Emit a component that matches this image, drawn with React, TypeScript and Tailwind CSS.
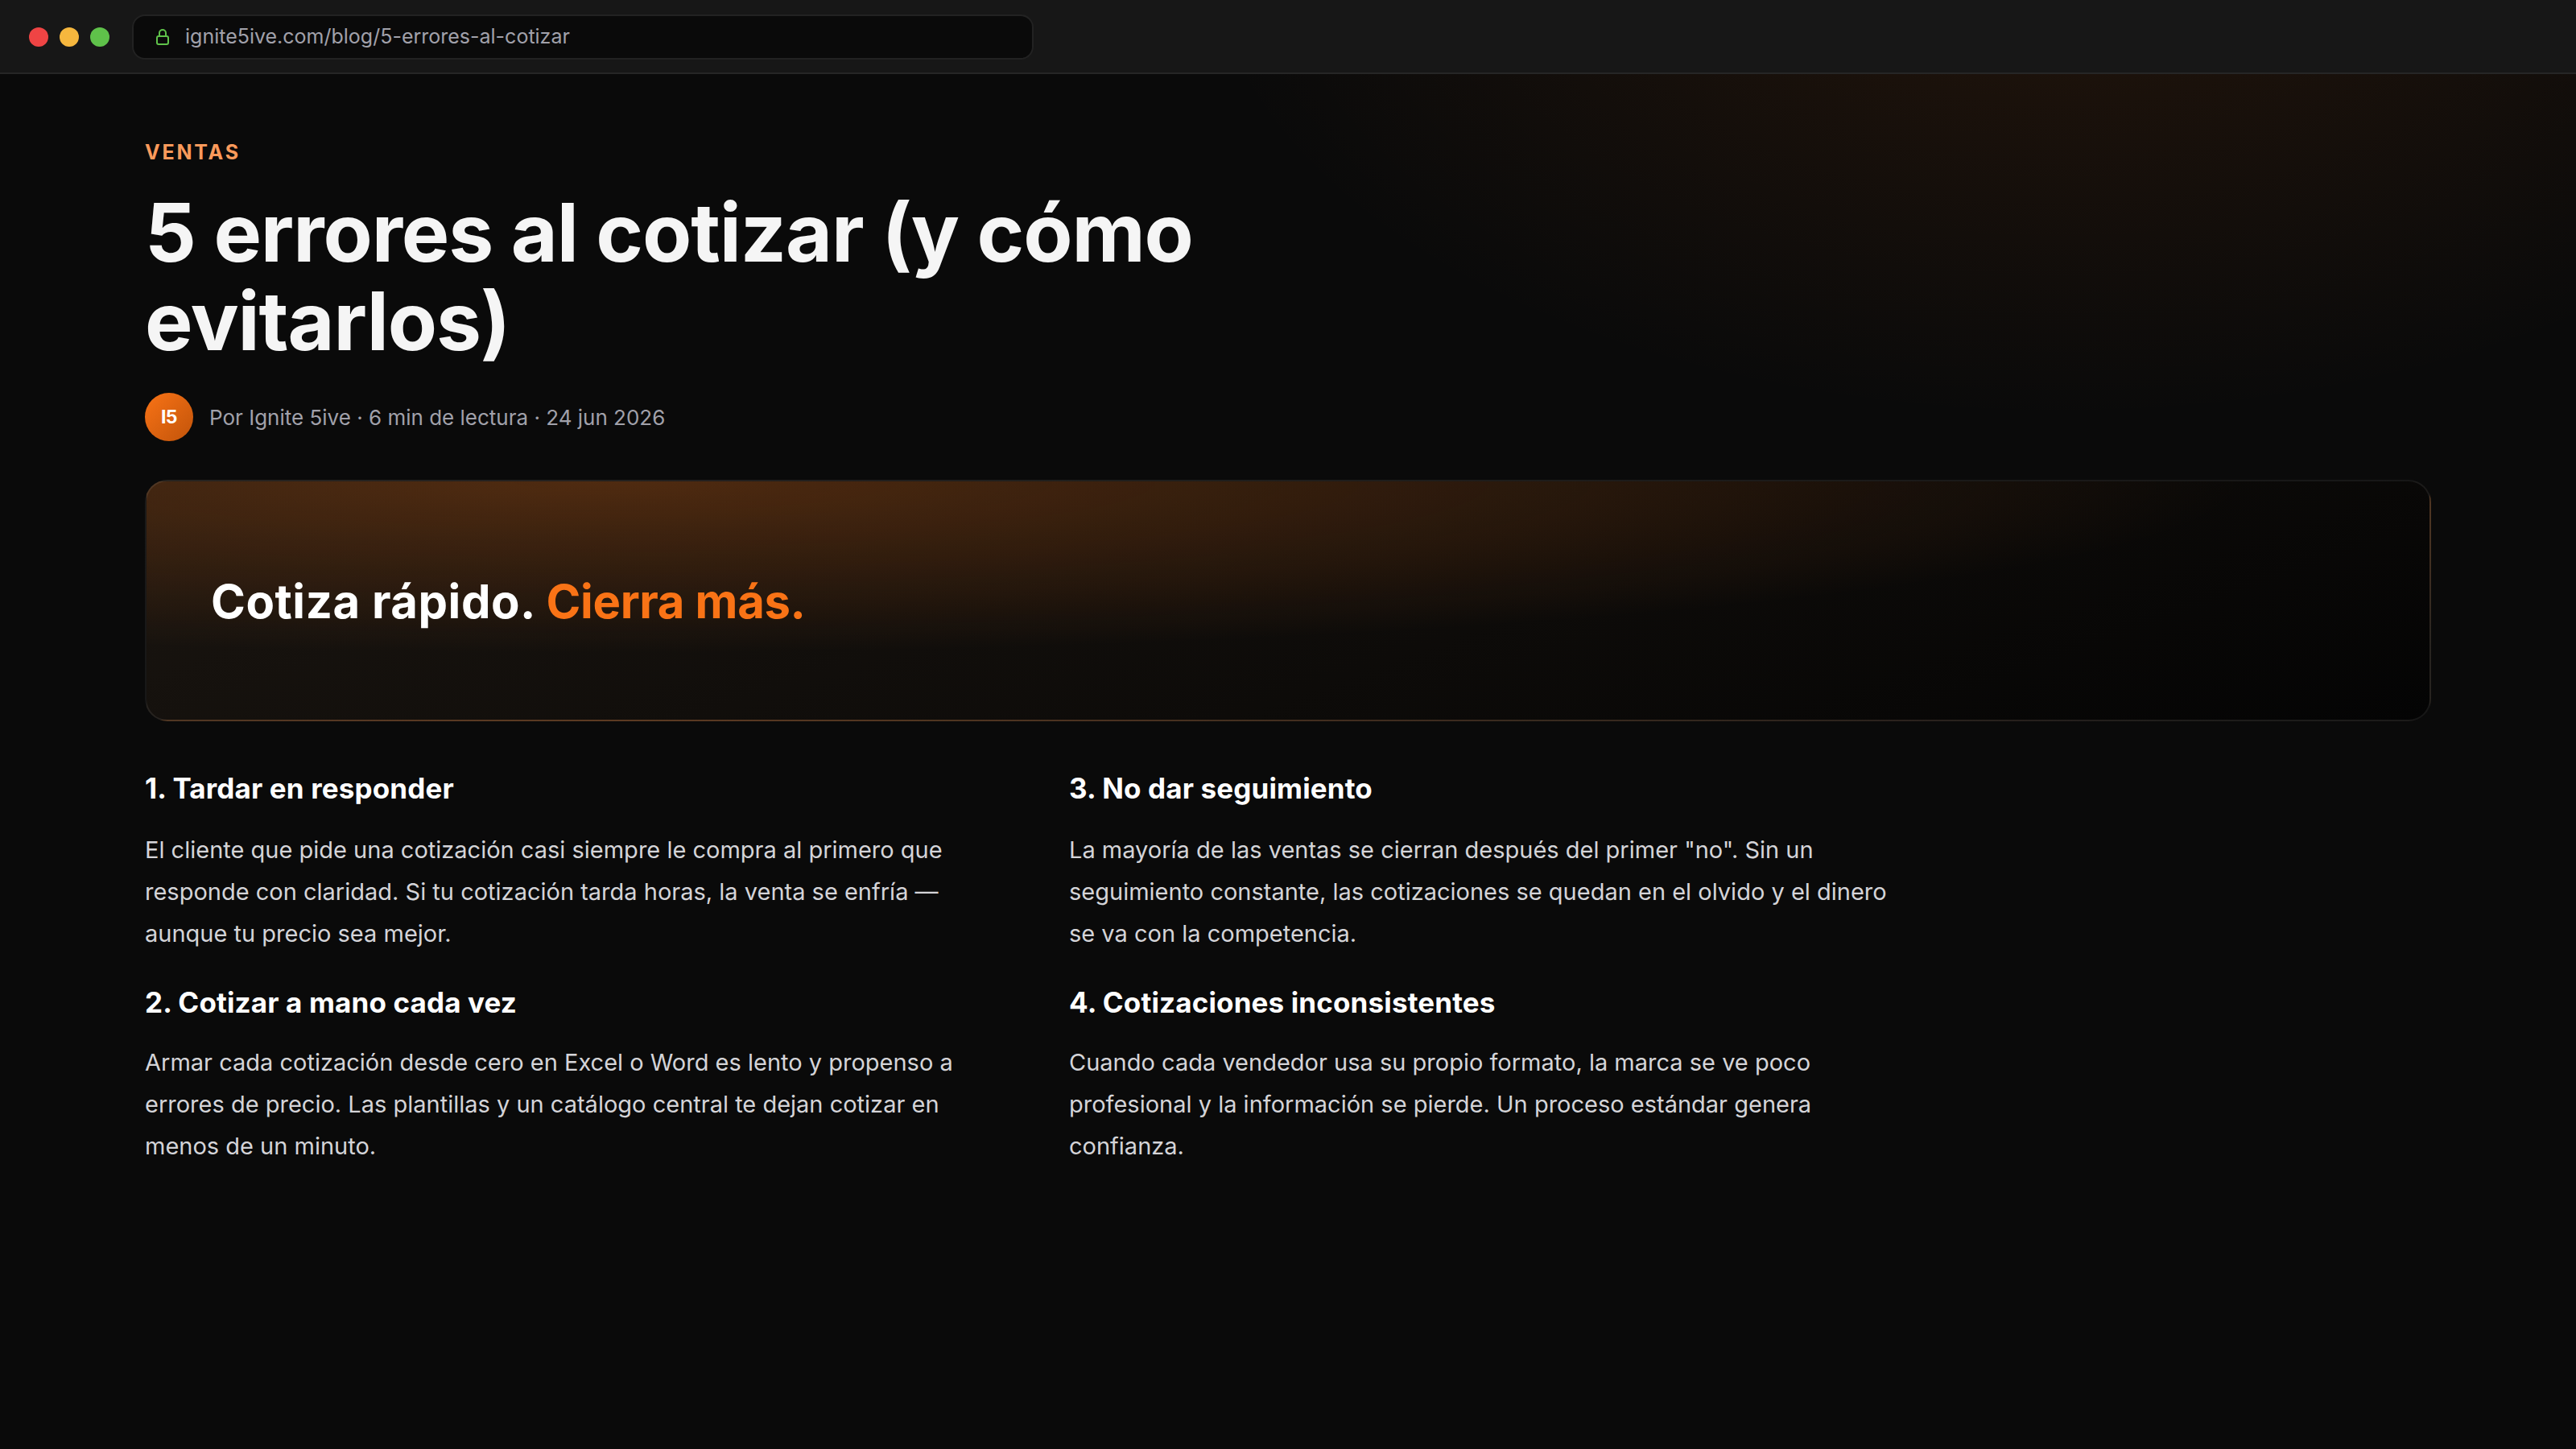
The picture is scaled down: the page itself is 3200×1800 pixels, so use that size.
const articles = [
  {
    title: '1. Tardar en responder',
    lines: [
      'El cliente que pide una cotización casi siempre le compra al primero que',
      'responde con claridad. Si tu cotización tarda horas, la venta se enfría —',
      'aunque tu precio sea mejor.',
    ],
    spacing: 'mt-7',
  },
  {
    title: '3. No dar seguimiento',
    lines: [
      'La mayoría de las ventas se cierran después del primer "no". Sin un',
      'seguimiento constante, las cotizaciones se quedan en el olvido y el dinero',
      'se va con la competencia.',
    ],
    spacing: 'mt-7',
  },
  {
    title: '2. Cotizar a mano cada vez',
    lines: [
      'Armar cada cotización desde cero en Excel o Word es lento y propenso a',
      'errores de precio. Las plantillas y un catálogo central te dejan cotizar en',
      'menos de un minuto.',
    ],
    spacing: 'mt-[26px]',
  },
  {
    title: '4. Cotizaciones inconsistentes',
    lines: [
      'Cuando cada vendedor usa su propio formato, la marca se ve poco',
      'profesional y la información se pierde. Un proceso estándar genera',
      'confianza.',
    ],
    spacing: 'mt-[26px]',
  },
]

function LockIcon() {
  return (
    <svg width="24" height="24" viewBox="0 0 24 24" fill="none" stroke="#5fc24a" strokeWidth="2">
      <rect x="5" y="11" width="14" height="10" rx="2" />
      <path d="M8 11V7a4 4 0 0 1 8 0v4" />
    </svg>
  )
}

function BrowserBar() {
  return (
    <header className="flex h-[92px] items-center border-b-2 border-[#262626] bg-[#171717] px-9 pt-0.5">
      <div className="flex gap-3.5">
        <span className="size-6 rounded-full bg-[#ef4444]" />
        <span className="size-6 rounded-full bg-[#f6b73e]" />
        <span className="size-6 rounded-full bg-[#5fc24a]" />
      </div>
      <div className="ml-7 flex h-14 w-[1120px] items-center gap-4 rounded-2xl border-2 border-[#222222] bg-[#0a0a0a] px-6">
        <LockIcon />
        <span className="pb-0.5 text-[25px] leading-8 text-[#a1a1aa]">ignite5ive.com/blog/5-errores-al-cotizar</span>
      </div>
    </header>
  )
}

function Banner() {
  return (
    <div className="mt-12 flex h-[300px] items-center rounded-[28px] border-2 border-white/8 bg-[radial-gradient(120%_120%_at_20%_0%,rgba(249,115,22,0.25),transparent_60%),linear-gradient(160deg,#1a1510,#040404)] px-20 pt-0.5">
      <p className="text-[58px] font-bold leading-[72px] tracking-[0.55px] text-white">
        Cotiza rápido. <span className="tracking-[-0.35px] text-[#f97316]">Cierra más.</span>
      </p>
    </div>
  )
}

interface ArticleProps {
  title: string
  lines: string[]
  spacing: string
}

function Article({ title, lines, spacing }: ArticleProps) {
  return (
    <section>
      <h2 className="text-[35px] font-bold leading-[46px] tracking-[0.14px] text-white">{title}</h2>
      <p className={`${spacing} text-[29px] leading-[52px] text-[#d4d4d8]`}>
        {lines.map((line) => (
          <span key={line} className="block whitespace-nowrap">
            {line}
          </span>
        ))}
      </p>
    </section>
  )
}

export default function App() {
  return (
    <div className="flex h-[1800px] w-[3200px] flex-col overflow-hidden bg-[#0a0a0a] font-['Inter',sans-serif]">
      <BrowserBar />
      <main className="flex-1 bg-[radial-gradient(1800px_1000px_at_80%_-10%,rgba(249,115,22,0.10),transparent_60%)] px-[180px] pt-[81px]">
        <p className="text-[25px] font-bold leading-8 tracking-[2.8px] text-[#fb9a5b]">VENTAS</p>
        <h1 className="mt-[29px] text-[100px] font-bold leading-[110px] tracking-[-1.1px] text-[#f5f5f5]">
          <span className="block whitespace-nowrap">5 errores al cotizar (y cómo</span>
          <span className="block whitespace-nowrap">evitarlos)</span>
        </h1>
        <div className="mt-[34px] flex items-center gap-5">
          <div className="flex size-[60px] items-center justify-center rounded-full bg-linear-135 from-[#f97316] to-[#c2540a] text-[23px] font-bold tracking-[-0.6px] text-white">
            I5
          </div>
          <span className="pt-0.5 text-[26px] leading-8 text-[#a1a1aa]">Por Ignite 5ive · 6 min de lectura · 24 jun 2026</span>
        </div>
        <Banner />
        <div className="mt-[60px] grid w-[2200px] grid-cols-2 gap-x-24 gap-y-9">
          {articles.map((article) => (
            <Article key={article.title} {...article} />
          ))}
        </div>
      </main>
    </div>
  )
}
